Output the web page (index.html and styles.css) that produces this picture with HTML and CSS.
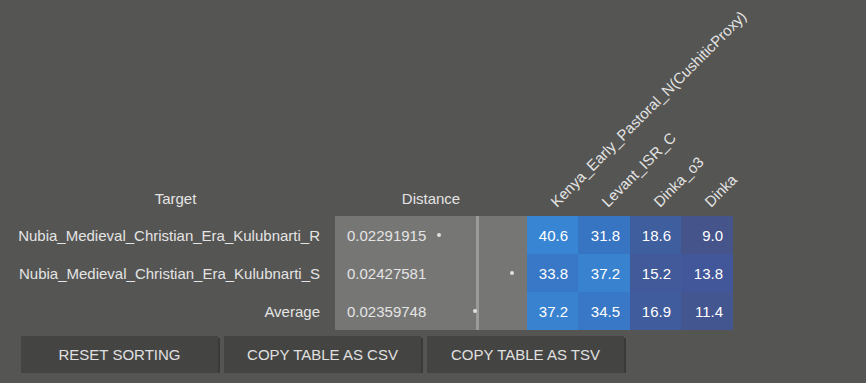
FILE: index.html
```html
<!DOCTYPE html>
<html>
<head>
<meta charset="utf-8">
<link rel="stylesheet" href="styles.css">
</head>
<body>
<div class="page">
  <div class="table">
    <div class="th th-center">Target</div>
    <div class="th th-center">Distance</div>
    <div class="th rot"><span>Kenya_Early_Pastoral_N(CushiticProxy)</span></div>
    <div class="th rot"><span>Levant_ISR_C</span></div>
    <div class="th rot"><span>Dinka_o3</span></div>
    <div class="th rot"><span>Dinka</span></div>

    <div class="target">Nubia_Medieval_Christian_Era_Kulubnarti_R</div>
    <div class="dist">0.02291915<i class="line"></i><i class="dot" style="left:102px"></i></div>
    <div class="heat" style="background:#3886d3">40.6</div>
    <div class="heat" style="background:#3775c3">31.8</div>
    <div class="heat" style="background:#3f5e9d">18.6</div>
    <div class="heat" style="background:#45548a">9.0</div>

    <div class="target">Nubia_Medieval_Christian_Era_Kulubnarti_S</div>
    <div class="dist">0.02427581<i class="line"></i><i class="dot" style="left:175px"></i></div>
    <div class="heat" style="background:#3878c6">33.8</div>
    <div class="heat" style="background:#3882d0">37.2</div>
    <div class="heat" style="background:#42599a">15.2</div>
    <div class="heat" style="background:#425799">13.8</div>

    <div class="target">Average</div>
    <div class="dist">0.02359748<i class="line"></i><i class="dot" style="left:138px"></i></div>
    <div class="heat" style="background:#3882d0">37.2</div>
    <div class="heat" style="background:#3878c6">34.5</div>
    <div class="heat" style="background:#405c9c">16.9</div>
    <div class="heat" style="background:#44568f">11.4</div>
  </div>
  <div class="buttons">
    <button class="btn">RESET SORTING</button>
    <button class="btn">COPY TABLE AS CSV</button>
    <button class="btn">COPY TABLE AS TSV</button>
  </div>
</div>
</body>
</html>
```

FILE: styles.css
```css
html, body {
  margin: 0;
  background: #555553;
}
body {
  font-family: "Liberation Sans", Arial, sans-serif;
  font-size: 15px;
  color: #e4e4e4;
}
.page {
  padding-left: 16px;
}
.table {
  display: grid;
  grid-template-columns: 319px 192px 51px 52px 51px 52px;
  grid-template-rows: 216px repeat(3, 38px);
}
.th {
  display: flex;
  align-items: flex-end;
  padding-bottom: 9px;
  color: #e4e4e4;
}
.th-center {
  justify-content: center;
}
.rot {
  padding-left: 32px;
  padding-bottom: 6px;
}
.rot span {
  white-space: nowrap;
  transform: rotate(-45deg);
  transform-origin: 0 100%;
}
.target {
  display: flex;
  align-items: center;
  justify-content: flex-end;
  padding-right: 15px;
  white-space: nowrap;
}
.dist {
  position: relative;
  display: flex;
  align-items: center;
  padding-left: 12px;
  background: #767674;
}
.line {
  position: absolute;
  left: 141px;
  top: 0;
  bottom: 0;
  width: 3px;
  background: #9b9b99;
}
.dot {
  position: absolute;
  top: 17px;
  width: 4px;
  height: 4px;
  border-radius: 50%;
  background: #e0e0e0;
}
.heat {
  display: flex;
  align-items: center;
  justify-content: flex-end;
  padding-right: 10px;
  color: #ffffff;
}
.buttons {
  display: flex;
  gap: 6px;
  margin-top: 6px;
  padding-left: 5px;
}
.btn {
  width: 197px;
  height: 37px;
  border: none;
  background: #444442;
  color: #e0e0e0;
  font-family: "Liberation Sans", Arial, sans-serif;
  font-size: 15px;
  box-shadow: 2px 2px 0 #3a3a38;
  padding: 0;
}
```
